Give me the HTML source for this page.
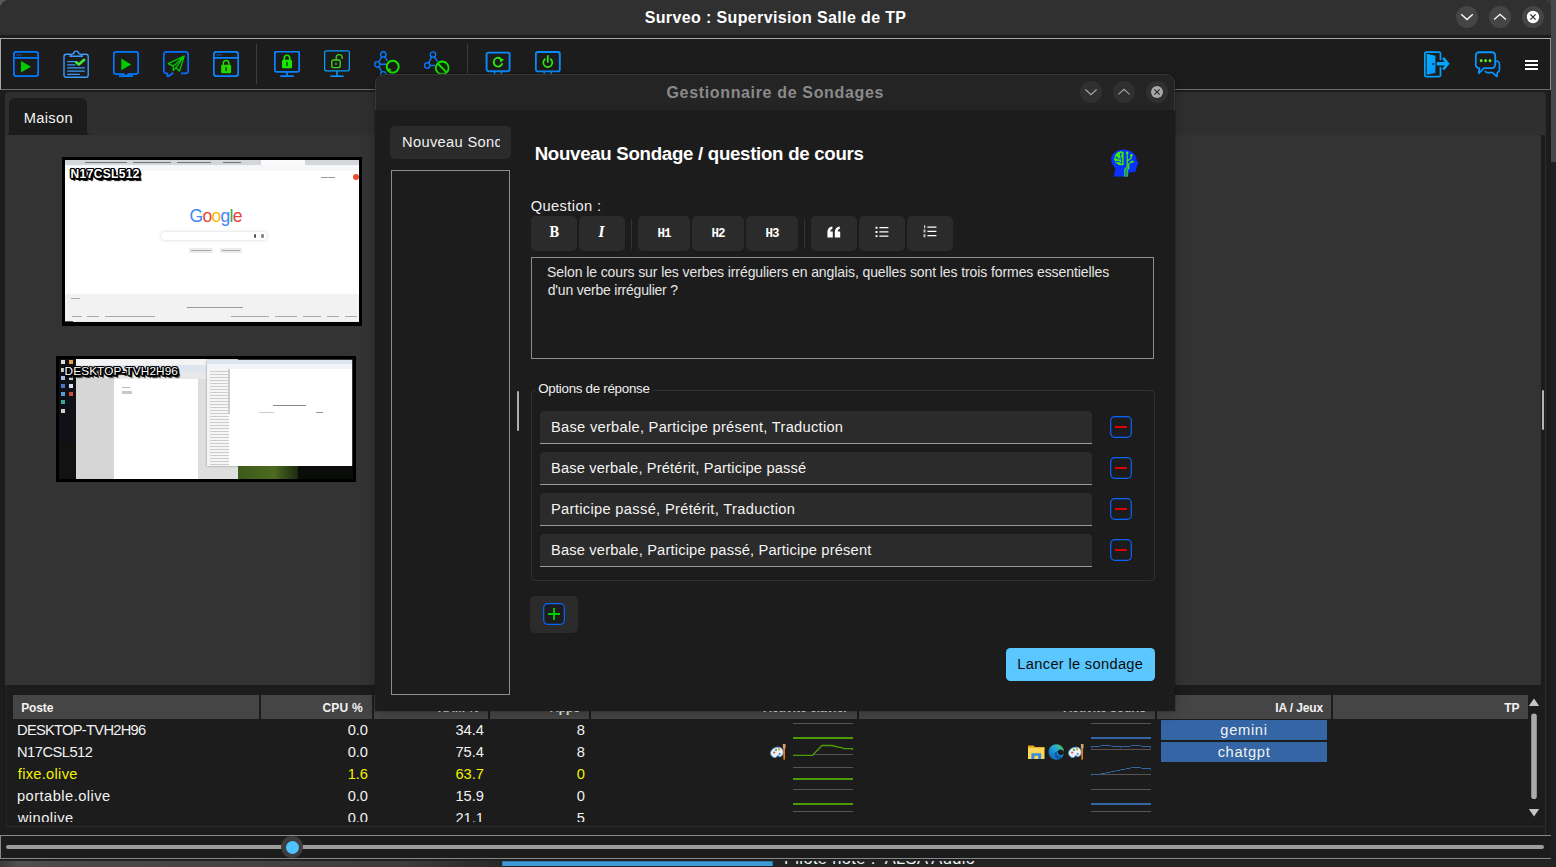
<!DOCTYPE html>
<html lang="fr"><head><meta charset="utf-8"><title>Surveo : Supervision Salle de TP</title>
<style>
*{box-sizing:border-box;margin:0;padding:0}
html,body{width:1556px;height:867px;overflow:hidden}
body{position:relative;background:#232323;font-family:"Liberation Sans",sans-serif;font-size:14.67px;color:#f0f0f0}
.abs{position:absolute}
.t{position:absolute;white-space:nowrap;line-height:1}
#win{position:absolute;left:0;top:0;width:1551px;height:860px;background:#1c1c1c;border-radius:9px 9px 0 0;overflow:hidden}
#titlebar{position:absolute;left:0;top:0;width:1551px;height:35px;background:#303030}
.wbtn{position:absolute;width:22px;height:22px;border-radius:11px;background:#454545}
#tbline{position:absolute;left:0;top:38px;width:1551px;height:1px;background:#a8a8a8}
#toolbar{position:absolute;left:0;top:39px;width:1551px;height:51px;background:#1c1c1c;border-left:1px solid #a8a8a8;border-right:1px solid #8a8a8a;border-bottom:1px solid #6c6c6c}
.ico{position:absolute;top:51px;width:26px;height:26px}
.lbl{color:#fff;text-shadow:-1px -1px 0 #000,1px -1px 0 #000,-1px 1px 0 #000,1px 1px 0 #000,0 -1.5px 0 #000,0 1.5px 0 #000,-1.5px 0 0 #000,1.5px 0 0 #000,2px 2px 0 #000,1px 2px 0 #000,2px 1px 0 #000,2.5px 2.5px 1px #000}
.hd{top:695px;height:24px;background:#454545}
.ht{top:701.5px;font-size:12px;font-weight:bold;color:#f2f2f2}
.r{text-align:right}
.c{font-size:14.67px;color:#f2f2f2}
.y{color:#f2f200}
#dlg{position:absolute;left:375px;top:74px;width:800px;height:637px;background:#1c1c1c;border-radius:9px 9px 0 0;overflow:hidden;box-shadow:0 0 0 1px rgba(0,0,0,.12),0 2px 14px rgba(0,0,0,.22)}
.dbtn{position:absolute;width:22px;height:22px;border-radius:11px;background:#303030}
.eb{position:absolute;top:142px;height:35px;background:#2b2b2b;border-radius:5px;text-align:center;color:#fff}
.m{font-family:"Liberation Mono","DejaVu Sans Mono",monospace;font-weight:bold;line-height:35px;display:inline-block}
.h{font-size:12.5px;letter-spacing:-1.1px;line-height:37px;transform:scaleY(1.06)}
.sf{font-family:"DejaVu Serif","Liberation Serif",serif;font-weight:bold;font-size:15px;line-height:33px;display:inline-block;transform:scaleX(.8)}
.q{font-size:14px;color:#e6e6e6}
.inp{position:absolute;left:165px;width:552px;height:33px;background:#2b2b2b;border-radius:4px 4px 0 0;border-bottom:1px solid #9a9a9a}
.o{left:176px;margin-top:.4px;font-size:14.67px;color:#f4f4f4}
.sep{position:absolute;top:44px;width:1px;height:40px;background:#3c3c3c}
</style></head><body>
<!-- background bits outside the main window -->
<div class="abs" style="left:1551px;top:0;width:5px;height:162px;background:#474747"></div><div class="abs" style="left:1551px;top:162px;width:5px;height:705px;background:#1f1f1f"></div>
<div class="abs" style="left:0;top:860px;width:1556px;height:7px;background:#212325"></div><div class="abs" style="left:0;top:860.5px;width:502px;height:6.5px;background:linear-gradient(90deg,#3c3c3c,#505050 4%,#4a4a4a 10%,#454545 40%,#3c3c3c 80%,#2c2c2c 95%,#262626)"></div><div class="abs" style="left:502px;top:861px;width:271px;height:5px;background:#3d9ad6;border:1px solid #2a78b0;border-bottom:none"></div><div class="abs" style="left:780px;top:860.5px;width:220px;height:6.5px;overflow:hidden"><div class="t" id="pil" style="left:4px;top:-10.3px;font-size:16.5px;color:#f0f0f0;letter-spacing:.35px">Pilote hôte :&nbsp; ALSA Audio</div></div>
<div class="abs" style="left:0;top:0;width:12px;height:12px;background:#5a5a5a"></div>
<div class="abs" style="left:1539px;top:0;width:12px;height:12px;background:#3a3a3a"></div>

<div id="win">
 <div id="titlebar"></div>
 <div class="t" id="title" style="left:644.64px;top:10px;font-weight:bold;font-size:16px;color:#fff;letter-spacing:0.373px">Surveo : Supervision Salle de TP</div>
 <div class="wbtn" style="left:1456px;top:6px"><svg width="22" height="22" viewBox="0 0 22 22"><path d="M5.2 8.3 L11 13.6 L16.8 8.3" fill="none" stroke="#fff" stroke-width="1.3"/></svg></div>
 <div class="wbtn" style="left:1489px;top:6px"><svg width="22" height="22" viewBox="0 0 22 22"><path d="M5.2 13.6 L11 8.3 L16.8 13.6" fill="none" stroke="#fff" stroke-width="1.3"/></svg></div>
 <div class="wbtn" style="left:1522px;top:6px"><svg width="22" height="22" viewBox="0 0 22 22"><circle cx="11" cy="11" r="6.2" fill="#fff"/><path d="M8.4 8.4 L13.6 13.6 M13.6 8.4 L8.4 13.6" fill="none" stroke="#303030" stroke-width="1.3"/></svg></div>
 <div id="tbline"></div>
 <div id="toolbar"></div>
 <!--ICONS-->
 <svg class="ico" style="left:13px" viewBox="0 0 26 26"><rect x=".8" y=".8" width="24.4" height="24.4" rx="2.6" fill="none" stroke="#0078ff" stroke-width="1.8"/><path d="M.8 6.8H25.2" stroke="#0078ff" stroke-width="1.8"/><path d="M3.6 3.9h1M5.6 3.9h1M7.6 3.9h1" stroke="#0078ff" stroke-width="1.2"/><path d="M8 10 L8 21.6 L18 15.7Z" fill="#00cc00"/></svg>
 <svg class="ico" style="left:63px;top:50px;height:28px" viewBox="0 0 26 28"><path d="M8 4.3H3.2a2.2 2.2 0 0 0-2.2 2.2V25a2.2 2.2 0 0 0 2.2 2.2H23a2.2 2.2 0 0 0 2.2-2.2V6.500000000000001a2.2 2.2 0 0 0-2.2-2.2H18.3" fill="none" stroke="#3b9bff" stroke-width="1.4"/><path d="M7.2 6.3c0-2 2-2.2 3.4-2.6c.2-1.6 1.1-2.600000000000001 2.6-2.6s2.4 1 2.6 2.6c1.4.4 3.4.6 3.4 2.6z" fill="none" stroke="#3b9bff" stroke-width="1.4"/><path d="M4.2 11.600000000000001H13M4.2 14.8H12.5M4.2 17.9H21.8M4.2 21.2H21.8M4.2 24.4H16.8" stroke="#3b9bff" stroke-width="1.2"/><path d="M13.300000000000001 12.3L15.8 14.4L21.2 9.8" fill="none" stroke="#3fe83f" stroke-width="2.6" stroke-linecap="round" stroke-linejoin="round"/></svg>
 <svg class="ico" style="left:113px" viewBox="0 0 26 26"><path d="M10.600000000000001 23.1H3.1a2.3 2.3 0 0 1-2.3-2.3V3.1A2.3 2.3 0 0 1 3.1.8H22.900000000000002a2.3 2.3 0 0 1 2.3 2.3V20.8a2.3 2.3 0 0 1-2.3 2.3H15.4L14.3 24.6H11.700000000000001Z" fill="none" stroke="#0078ff" stroke-width="1.8"/><path d="M6 25.2H20" stroke="#0078ff" stroke-width="1.7"/><path d="M8.3 7.6L8.3 19.2L18.2 13.4Z" fill="#00cc00"/></svg>
 <svg class="ico" style="left:163px" viewBox="0 0 26 26"><path d="M10.3 21.8L4.6 26L4.2 22.400000000000002H3.4A2.6 2.6 0 0 1 .8 19.8V3.4A2.6 2.6 0 0 1 3.4.8H22.6a2.6 2.6 0 0 1 2.6 2.6V19.8a2.6 2.6 0 0 1-2.6 2.6H18" fill="none" stroke="#0a6cff" stroke-width="1.8" stroke-linejoin="round"/><path d="M21.2 5L5.2 12.600000000000001L10.4 15.4L10.200000000000001 19.6L12.8 16.8L16.6 20.2ZM21.2 5L10.4 15.4M21.2 5L12.8 16.8" fill="#0a3d0a" fill-opacity=".5" stroke="#00d000" stroke-width="1.2" stroke-linejoin="round"/></svg>
 <svg class="ico" style="left:213px" viewBox="0 0 26 26"><rect x=".8" y=".8" width="24.4" height="24.4" rx="2.6" fill="none" stroke="#0a84ff" stroke-width="1.8"/><path d="M.8 6.8H25.2" stroke="#0a84ff" stroke-width="1.8"/><path d="M3.6 3.9h1M5.6 3.9h1M7.6 3.9h1" stroke="#0a84ff" stroke-width="1.2"/><path d="M10.3 14V12.4a2.8 2.8 0 0 1 5.6 0V14" fill="none" stroke="#22d600" stroke-width="1.5"/><rect x="8.1" y="13.7" width="10" height="8.6" rx="1.2" fill="#22d600"/><path d="M13.100000000000001 16.6V19.5" stroke="#143d0a" stroke-width="1.4" stroke-linecap="round"/></svg>
 <div class="sep" style="left:256px"></div>
 <svg class="ico" style="left:274px" viewBox="0 0 26 26"><rect x=".8" y=".5" width="24.4" height="20.4" rx="1.8" fill="none" stroke="#0a84ff" stroke-width="1.8"/><path d="M13 21V25M6.2 25.2H19.8" stroke="#0a84ff" stroke-width="1.7"/><path d="M10.3 9.5V7a2.7 2.7 0 0 1 5.4 0V9.5" fill="none" stroke="#19e600" stroke-width="1.6"/><rect x="8" y="8.8" width="10" height="8.4" rx="1.2" fill="#19e600"/><path d="M13 11.5V14.5" stroke="#143d0a" stroke-width="1.4" stroke-linecap="round"/></svg>
 <svg class="ico" style="left:324px;top:50px;height:28px" viewBox="0 0 26 28"><rect x=".6" y=".9" width="24.8" height="20" rx="1.8" fill="none" stroke="#0a9bff" stroke-width="1.3"/><path d="M13 21V26M6.4 26.2H19.6" stroke="#0a9bff" stroke-width="1.5"/><rect x="7.8" y="10" width="8.4" height="7.6" rx="1.8" fill="none" stroke="#3fd41a" stroke-width="1.4"/><path d="M12.2 10V7.6a3 3 0 0 1 6 0V9" fill="none" stroke="#3fd41a" stroke-width="1.3"/><path d="M12 12.7V15" stroke="#3fd41a" stroke-width="1.3"/></svg>
 <svg class="ico" style="left:374px" viewBox="0 0 26 26"><g fill="none" stroke="#0a7bff" stroke-width="1.4"><circle cx="9.3" cy="3.4" r="2.7"/><circle cx="3.4" cy="13.3" r="2.7"/><circle cx="9.3" cy="23.3" r="2.7"/><path d="M7.9 5.7L4.8 11M10.700000000000001 5.7L13.4 9.9M6.1 13.3H12M4.8 15.600000000000001L7.9 21"/></g><circle cx="18.7" cy="15.7" r="6" fill="#1c1c1c" stroke="#19e600" stroke-width="2"/><path d="M13.8 17.2L17.6 18.200000000000003L15 21Z" fill="#19e600"/></svg>
 <svg class="ico" style="left:424px" viewBox="0 0 26 26"><g fill="none" stroke="#0a7bff" stroke-width="1.4"><circle cx="9" cy="3.6" r="2.7"/><circle cx="3.2" cy="14.5" r="2.7"/><path d="M7.6 5.9L4.6 12.200000000000001M10.4 5.9L13.5 10.5M5.9 14.5H11"/></g><circle cx="18.2" cy="16.9" r="6.400000000000001" fill="#0d2a0d" stroke="#19e600" stroke-width="1.8"/><path d="M13.8 12.5L22.6 21.3" stroke="#19e600" stroke-width="1.8"/></svg>
 <div class="sep" style="left:467px"></div>
 <svg class="ico" style="left:485px" viewBox="0 0 26 26"><rect x="1.6" y="1.6" width="23" height="18.6" rx="2" fill="none" stroke="#0a8cff" stroke-width="1.9"/><path d="M9.6 20.2V25M16.400000000000002 20.2V25" stroke="#0a8cff" stroke-width="1.5"/><path d="M17.3 12.3A4.4 4.4 0 1 1 15.6 7.6" fill="none" stroke="#2bea12" stroke-width="1.8"/><path d="M14.2 6.7L19 8.6L15.6 11.600000000000001Z" fill="#2bea12"/></svg>
 <svg class="ico" style="left:535px" viewBox="0 0 26 26"><rect x=".8" y="1" width="24" height="19.4" rx="2" fill="none" stroke="#0a8cff" stroke-width="1.9"/><path d="M9.2 20.4V25M16.2 20.4V25" stroke="#0a8cff" stroke-width="1.5"/><path d="M9.9 8.200000000000001A4.5 4.5 0 1 0 15.700000000000001 8.200000000000001" fill="none" stroke="#2bea12" stroke-width="1.7" stroke-linecap="round"/><path d="M12.8 4.800000000000001V11" stroke="#2bea12" stroke-width="1.7" stroke-linecap="round"/></svg>
 <svg class="ico" style="left:1424px;height:27px" viewBox="0 0 27 27"><defs><linearGradient id="gd" x1="0" y1="0" x2="1" y2="1"><stop offset="0" stop-color="#00b4ff"/><stop offset="1" stop-color="#0a90ff"/></linearGradient></defs><path d="M17.1 9V2.2a1.500000000000000 1.5 0 0 0-1.5-1.5H2.3A1.5 1.5 0 0 0 .8 2.2V24.6a1.5 1.5 0 0 0 1.5 1.5H15.6a1.5 1.5 0 0 0 1.5-1.5V16.2" fill="none" stroke="#00a2ff" stroke-width="1.8"/><path d="M2.8 2.400000000000000L11.9 4.4V22.3L2.8 24.2Z" fill="url(#gd)"/><circle cx="9.5" cy="12.9" r="1" fill="#0b2038"/><path d="M13.2 10.9H21.6L18.9 7.6L20.9 5.8L26.6 12.7L20.9 19.6L18.9 17.8L21.6 14.5H13.2Z" fill="#00a8ff"/></svg>
 <svg class="ico" style="left:1475px;height:28px" viewBox="0 0 27 28"><path d="M4.4 17.2H4.2A3.4 3.4 0 0 1 .8 13.8V4.2A3.4 3.4 0 0 1 4.2.8H17.6A3.4 3.4 0 0 1 21 4.2V13.8A3.4 3.4 0 0 1 17.6 17.2H9.4L4 22.400000000000002Z" fill="none" stroke="#0a96ff" stroke-width="1.9" stroke-linejoin="round"/><path d="M22 10H22.400000000000002A3 3 0 0 1 25.400000000000002 13V19A3 3 0 0 1 23.200000000000003 21.8L22.8 26L18.200000000000003 21.900000000000002H13A3 3 0 0 1 10.3 20.2" fill="none" stroke="#0a96ff" stroke-width="1.7" stroke-linejoin="round"/><circle cx="6.4" cy="9.6" r="1.5" fill="#5cf02a"/><circle cx="11" cy="9.6" r="1.5" fill="#5cf02a"/><circle cx="15.6" cy="9.6" r="1.5" fill="#5cf02a"/></svg>
 <div class="abs" style="left:1525px;top:60px;width:13px;height:2px;background:#fff"></div>
 <div class="abs" style="left:1525px;top:64px;width:13px;height:2px;background:#fff"></div>
 <div class="abs" style="left:1525px;top:68px;width:13px;height:2px;background:#fff"></div>
 <!--/ICONS-->
 <!--MAIN-->
 <div class="abs" style="left:5px;top:92px;width:1540px;height:43px;background:#2f2f2f;border-radius:4px 4px 0 0"></div>
 <div class="abs" style="left:5px;top:135px;width:1536px;height:550px;background:#333333"></div>
 <div class="abs" style="left:9px;top:98px;width:78px;height:37px;background:#1c1c1c;border-radius:6px 6px 0 0"></div>
 <div class="abs" style="left:7px;top:133px;width:82px;height:2px;background:#1c1c1c;border-radius:2px 2px 0 0"></div>
 <div class="t" id="tab" style="left:23.66px;top:110.7px;font-size:14.67px;color:#f2f2f2;letter-spacing:0.36px">Maison</div>
 <div class="abs" style="left:1542px;top:390px;width:2px;height:40px;background:#b4b4b4;border-radius:1px"></div>
 <div class="abs" style="left:1545px;top:92px;width:1px;height:743px;background:#2b2b2b"></div>
 <!-- thumbnail 1 -->
 <div class="abs" style="left:62px;top:157px;width:300px;height:169px;background:#000"></div>
 <div class="abs" style="left:65px;top:160px;width:294px;height:162px;background:#fff;overflow:hidden">
  <div class="abs" style="left:0;top:0;width:294px;height:5.5px;background:#d3d6db"></div>
  <div class="abs" style="left:196px;top:0;width:44px;height:5px;background:#fafafa"></div>
  <div class="abs" style="left:0;top:5px;width:294px;height:6px;background:#f6f7f8"></div>
  <div class="abs" style="left:20px;top:2px;width:42px;height:1px;background:#707378"></div>
  <div class="abs" style="left:68px;top:2px;width:38px;height:1px;background:#707378"></div>
  <div class="abs" style="left:112px;top:2px;width:34px;height:1px;background:#707378"></div>
  <div class="abs" style="left:158px;top:2px;width:18px;height:1px;background:#707378"></div>
  <div class="abs" style="left:256px;top:17px;width:14px;height:1px;background:#999"></div>
  <div class="abs" style="left:288px;top:14px;width:6px;height:6px;border-radius:3px;background:#e8502a"></div>
  <div class="t" style="left:124.5px;top:48px;font-size:17.5px;letter-spacing:-.7px"><span style="color:#4285f4">G</span><span style="color:#ea4335">o</span><span style="color:#fbbc05">o</span><span style="color:#4285f4">g</span><span style="color:#34a853">l</span><span style="color:#ea4335">e</span></div>
  <div class="abs" style="left:95px;top:71px;width:108px;height:10px;border-radius:5px;border:1px solid #eee;box-shadow:0 0 2px #ddd"></div>
  <div class="abs" style="left:189px;top:74px;width:2px;height:4px;background:#555;border-radius:1px"></div>
  <div class="abs" style="left:196px;top:74px;width:3px;height:4px;background:#888;border-radius:1px"></div>
  <div class="abs" style="left:124px;top:88px;width:24px;height:5px;background:#ececec"></div>
  <div class="abs" style="left:155px;top:88px;width:22px;height:5px;background:#ececec"></div>
  <div class="abs" style="left:126px;top:90px;width:20px;height:1px;background:#aaa"></div>
  <div class="abs" style="left:157px;top:90px;width:18px;height:1px;background:#aaa"></div>
  <div class="abs" style="left:0;top:134px;width:294px;height:28px;background:#f2f2f2"></div>
  <div class="abs" style="left:6px;top:138px;width:9px;height:1px;background:#aaa"></div>
  <div class="abs" style="left:122px;top:147px;width:56px;height:1px;background:#9a9a9a"></div>
  <div class="abs" style="left:7px;top:156px;width:10px;height:1px;background:#aaa"></div>
  <div class="abs" style="left:22px;top:156px;width:12px;height:1px;background:#aaa"></div>
  <div class="abs" style="left:40px;top:156px;width:50px;height:1px;background:#aaa"></div>
  <div class="abs" style="left:166px;top:156px;width:38px;height:1px;background:#aaa"></div>
  <div class="abs" style="left:210px;top:156px;width:22px;height:1px;background:#aaa"></div>
  <div class="abs" style="left:238px;top:156px;width:18px;height:1px;background:#aaa"></div>
  <div class="abs" style="left:262px;top:156px;width:12px;height:1px;background:#aaa"></div>
  <div class="abs" style="left:280px;top:156px;width:12px;height:1px;background:#aaa"></div>
  <div class="abs" style="left:0;top:161px;width:294px;height:1px;background:#e8eaec"></div>
  <div class="abs" style="left:0;top:161px;width:8px;height:1px;background:#555"></div>
 </div>
 <div class="t lbl" id="lb1" style="left:70.6px;top:167.8px;font-size:12px;font-weight:bold;letter-spacing:.35px">N17CSL512</div>
 <!-- thumbnail 2 -->
 <div class="abs" style="left:56px;top:356px;width:300px;height:126px;background:#000"></div>
 <div class="abs" style="left:59px;top:359px;width:294px;height:120px;background:#10130f;overflow:hidden">
  <div class="abs" style="left:0;top:0;width:17px;height:85px;background:#101116"></div>
  <div class="abs" style="left:2px;top:1px;width:4px;height:4px;background:#ddd"></div><div class="abs" style="left:10px;top:1px;width:4px;height:4px;background:#e9a03a"></div>
  <div class="abs" style="left:2px;top:9px;width:4px;height:4px;background:#c9ccd5"></div><div class="abs" style="left:10px;top:9px;width:4px;height:4px;background:#8aa0c8"></div>
  <div class="abs" style="left:2px;top:17px;width:4px;height:4px;background:#a8b8d8"></div><div class="abs" style="left:10px;top:17px;width:4px;height:4px;background:#d8d8d8"></div>
  <div class="abs" style="left:2px;top:25px;width:4px;height:4px;background:#4a78d0"></div><div class="abs" style="left:10px;top:25px;width:4px;height:4px;background:#d8e0f0"></div>
  <div class="abs" style="left:2px;top:33px;width:4px;height:4px;background:#5a9ad8"></div><div class="abs" style="left:10px;top:33px;width:4px;height:4px;background:#d04a3a"></div>
  <div class="abs" style="left:2px;top:41px;width:4px;height:4px;background:#3aa898"></div>
  <div class="abs" style="left:2px;top:50px;width:4px;height:4px;background:#cfcfcf"></div>
  <div class="abs" style="left:17px;top:0;width:162px;height:120px;background:#dedede"></div>
  <div class="abs" style="left:17px;top:0;width:162px;height:6px;background:#f3f3f4"></div>
  <div class="abs" style="left:17px;top:6px;width:162px;height:7px;background:#dde5ee"></div>
  <div class="abs" style="left:17px;top:13px;width:162px;height:7px;background:#e8e8e8"></div>
  <div class="abs" style="left:17px;top:19px;width:38px;height:101px;background:#d6d6d6"></div>
  <div class="abs" style="left:55px;top:20px;width:84px;height:100px;background:#fff"></div>
  <div class="abs" style="left:63px;top:28px;width:8px;height:1px;background:#bbb"></div>
  <div class="abs" style="left:63px;top:32px;width:10px;height:3px;background:#c8c8c8"></div>
  <div class="abs" style="left:148px;top:1px;width:145px;height:106px;background:#fff;box-shadow:0 0 2px #888"></div>
  <div class="abs" style="left:148px;top:1px;width:145px;height:4px;background:#dfe6f2"></div>
  <div class="abs" style="left:148px;top:5px;width:145px;height:5px;background:#f1f3f6"></div>
  <div class="abs" style="left:148px;top:10px;width:22px;height:97px;background:repeating-linear-gradient(180deg,#f4f4f4 0,#f4f4f4 2px,#c4c4c4 2px,#c4c4c4 3px);opacity:.85"></div>
  <div class="abs" style="left:148px;top:10px;width:3px;height:97px;background:#f4f4f4"></div>
  <div class="abs" style="left:169px;top:10px;width:2px;height:45px;background:#ccc"></div>
  <div class="abs" style="left:214px;top:46px;width:33px;height:1px;background:#888"></div>
  <div class="abs" style="left:200px;top:53px;width:15px;height:1px;background:#ccc"></div>
  <div class="abs" style="left:257px;top:53px;width:7px;height:1px;background:#999"></div>
  <div class="abs" style="left:179px;top:107px;width:60px;height:13px;background:linear-gradient(90deg,#3d5a1a,#4c6b20 60%,#1c2a10)"></div>
  <div class="abs" style="left:239px;top:107px;width:55px;height:13px;background:#0a0c0a"></div>
 </div>
 <div class="t lbl" id="lb2" style="left:64.6px;top:366.2px;font-size:11.8px;letter-spacing:.1px">DESKTOP-TVH2H96</div>
 <!--/MAIN-->
 <!--TABLE-->
 <div class="abs" style="left:6px;top:685px;width:1540px;height:142px;border-left:1px solid #262626;border-bottom:1px solid #2a2a2a"></div>
 <div class="abs hd" style="left:13px;width:246px"></div>
 <div class="abs hd" style="left:261px;width:111px"></div>
 <div class="abs hd" style="left:374px;width:114px"></div>
 <div class="abs hd" style="left:490px;width:99px"></div>
 <div class="abs hd" style="left:591px;width:266px"></div>
 <div class="abs hd" style="left:859px;width:296px"></div>
 <div class="abs hd" style="left:1157px;width:174px"></div>
 <div class="abs hd" style="left:1333px;width:195px"></div>
 <div class="t ht" id="h1" style="left:21.16px;letter-spacing:-0.1px">Poste</div>
 <div class="t ht r" id="h2" style="right:1188px;letter-spacing:0.25px">CPU %</div>
 <div class="t ht r" id="h3" style="right:1072px">RAM %</div>
 <div class="t ht r" id="h4" style="right:971px">Apps</div>
 <div class="t ht r" id="h5" style="right:703px">Activité clavier</div>
 <div class="t ht r" id="h6" style="right:405px">Activité souris</div>
 <div class="t ht r" id="h7" style="right:228px;letter-spacing:-0.125px">IA / Jeux</div>
 <div class="t ht r" id="h8" style="right:31.5px">TP</div>
 <div class="abs" id="rows" style="left:13px;top:719px;width:1515px;height:103px;overflow:hidden">
  <div class="t c" id="r1" style="left:4.0px;top:4px;letter-spacing:-0.7px">DESKTOP-TVH2H96</div>
  <div class="t c" id="r2" style="left:4.0px;top:26px;letter-spacing:-0.5px">N17CSL512</div>
  <div class="t c y" id="r3" style="left:4.8px;top:48px;letter-spacing:0.288px">fixe.olive</div>
  <div class="t c" id="r4" style="left:4.0px;top:70px;letter-spacing:0.462px">portable.olive</div>
  <div class="t c" id="r5" style="left:4.8px;top:92px;letter-spacing:0.457px">winolive</div>
  <div class="t c r" style="right:1160px;top:4px">0.0</div>
  <div class="t c r" style="right:1160px;top:26px">0.0</div>
  <div class="t c r y" style="right:1160px;top:48px">1.6</div>
  <div class="t c r" style="right:1160px;top:70px">0.0</div>
  <div class="t c r" style="right:1160px;top:92px">0.0</div>
  <div class="t c r" style="right:1044px;top:4px">34.4</div>
  <div class="t c r" style="right:1044px;top:26px">75.4</div>
  <div class="t c r y" style="right:1044px;top:48px">63.7</div>
  <div class="t c r" style="right:1044px;top:70px">15.9</div>
  <div class="t c r" style="right:1044px;top:92px">21.1</div>
  <div class="t c r" style="right:943px;top:4px">8</div>
  <div class="t c r" style="right:943px;top:26px">8</div>
  <div class="t c r y" style="right:943px;top:48px">0</div>
  <div class="t c r" style="right:943px;top:70px">0</div>
  <div class="t c r" style="right:943px;top:92px">5</div>
 </div>
 <!-- sparklines -->
 <svg class="abs" style="left:793px;top:719px" width="60" height="100" viewBox="0 0 60 100"><g stroke="#555" stroke-width="1" fill="none"><path d="M0 4.5H60M20 35.5H60M0 48.5H60M0 70.5H60M0 92.5H60"/></g><g stroke="#4e9a06" fill="none"><path d="M0 19H60M0 60H60M0 85H60" stroke-width="2"/><path d="M0 36.3H19.5L29 26.5H39L45 28L49.5 28.8L50.5 29.6H59.5V31" stroke-width="1.3"/></g></svg>
 <svg class="abs" style="left:1091px;top:719px" width="60" height="100" viewBox="0 0 60 100"><g stroke="#555" stroke-width="1" fill="none"><path d="M0 4.5H60M0 30.5H60M0 55.5H60M0 70.5H60M0 92.5H60"/></g><g stroke="#3465a4" fill="none"><path d="M0 19H60M0 85H60" stroke-width="2"/><path d="M.5 29V27.5H9L10 26.5H19.5L20.500000000000004 27.5H29.5V28.5V27.5H39L40 26.5H49.5L50.5 27.5H59.5V29" stroke-width="1"/><path d="M.5 56.5V55.5H9L10 54.5H14L15 53.5H19L20 52.5H24L25 51.5H29L30 50.5H34L35 49.5H39L40 48.5H49.5L50.5 49.5H59.5V51" stroke-width="1"/></g></svg>
 <!-- app icons -->
 <svg class="abs" style="left:770px;top:744px" width="17" height="16" viewBox="0 0 17 16"><path d="M8 3.2C4 3.2.6 5.8.6 9.2c0 2.4 2 4.400000000000001 4.6 4.400000000000001c1.6 0 1.3-1.700000000000000 2.500000000000000-1.900000000000000c1.2-.2 1.300000000000000 1.400000000000000 2.8.9c1.7-.6 2.8-2.4 2.8-4.400000000000001C13.3 5 11.200000000000001 3.2 8 3.2Z" fill="#e8f1f8" stroke="#5c9ed0" stroke-width="1"/><circle cx="4.2" cy="8.5" r="1.100000000000000" fill="#e04a3a"/><circle cx="6" cy="5.9" r="1.100000000000000" fill="#46b04a"/><circle cx="9" cy="5.4" r="1.100000000000000" fill="#f0a020"/><circle cx="9.6" cy="10" r="1" fill="#3a7ad0"/><path d="M14.2 1.200000000000000V15" stroke="#e87d1a" stroke-width="1.700000000000000" stroke-linecap="round"/><path d="M14.2.6V3.6" stroke="#d8a070" stroke-width="2.6" stroke-linecap="round"/></svg>
 <svg class="abs" style="left:1028px;top:744px" width="17" height="16" viewBox="0 0 17 16"><path d="M0 1.6h5.6l1.400000000000000 1.400000000000000H16.5V5H0Z" fill="#e8a818"/><rect x="0" y="3.8" width="16.5" height="11.200000000000001" fill="#fbd75a"/><path d="M3.4 15V9.2h9.8V15h-3V11.8H6.4V15Z" fill="#3a8ee0"/></svg>
 <svg class="abs" style="left:1048px;top:744px" width="17" height="16" viewBox="0 0 17 16"><defs><linearGradient id="eg" x1="0" y1="1" x2="1" y2="0"><stop offset="0" stop-color="#0c59a4"/><stop offset=".5" stop-color="#1b9de2"/><stop offset="1" stop-color="#5fd35a"/></linearGradient></defs><circle cx="8.3" cy="8" r="7.8" fill="url(#eg)"/><path d="M16 8.4c0 2-1.600000000000000 3.4-3.6 3.4c-2.4 0-3.600000000000000-1.400000000000000-3.600000000000000-2.800000000000000c0-.8.4-1.400000000000000.8-1.800000000000000c-1.800000000000000.2-3.200000000000000 1.600000000000000-3.200000000000000 3.600000000000000c0 2.600000000000000 2.400000000000000 4.600000000000001 5.200000000000001 4.600000000000001" fill="#0a4a9a" fill-opacity=".75"/><path d="M10.200000000000001 9.600000000000000c-.4-.4-.6-1-.6-1.500000000000000c0-1.400000000000000 1.200000000000000-2.600000000000000 3-2.600000000000000c1.400000000000000 0 3.400000000000000.8 3.400000000000000 3c0 1.600000000000000-1.400000000000000 2.800000000000000-3 2.800000000000000c-1.200000000000000 0-2.200000000000000-.6-2.800000000000000-1.700000000000000Z" fill="#1c1c1c"/></svg>
 <svg class="abs" style="left:1068px;top:744px" width="17" height="16" viewBox="0 0 17 16"><path d="M8 3.2C4 3.2.6 5.8.6 9.2c0 2.4 2 4.400000000000001 4.6 4.400000000000001c1.6 0 1.3-1.700000000000000 2.500000000000000-1.900000000000000c1.2-.2 1.300000000000000 1.400000000000000 2.8.9c1.7-.6 2.8-2.4 2.8-4.400000000000001C13.3 5 11.200000000000001 3.2 8 3.2Z" fill="#e8f1f8" stroke="#5c9ed0" stroke-width="1"/><circle cx="4.2" cy="8.5" r="1.100000000000000" fill="#e04a3a"/><circle cx="6" cy="5.9" r="1.100000000000000" fill="#46b04a"/><circle cx="9" cy="5.4" r="1.100000000000000" fill="#f0a020"/><circle cx="9.6" cy="10" r="1" fill="#3a7ad0"/><path d="M14.2 1.200000000000000V15" stroke="#e87d1a" stroke-width="1.700000000000000" stroke-linecap="round"/><path d="M14.2.6V3.6" stroke="#d8a070" stroke-width="2.6" stroke-linecap="round"/></svg>
 <!-- IA cells -->
 <div class="abs" style="left:1161px;top:720px;width:166px;height:20px;background:#3465a4"></div>
 <div class="abs" style="left:1161px;top:742px;width:166px;height:20px;background:#3465a4"></div>
 <div class="t c" id="g1" style="left:1161px;width:166px;text-align:center;top:722.5px;letter-spacing:0.68px">gemini</div>
 <div class="t c" id="g2" style="left:1161px;width:166px;text-align:center;top:744.5px;letter-spacing:0.666px">chatgpt</div>
 <!-- scrollbar -->
 <svg class="abs" style="left:1528px;top:695px" width="12" height="127" viewBox="0 0 12 127"><path d="M.8 11L6 3.600000000000000L11.2 11Z" fill="#c4c4c4"/><path d="M.8 114L6 121.4L11.2 114Z" fill="#c4c4c4"/><rect x="3.2" y="18.5" width="5.6" height="85.5" rx="2.8" fill="#aaa"/></svg>
 <!--/TABLE-->
 <!--SLIDER-->
 <div class="abs" style="left:0;top:835px;width:1551px;height:24px;border:1px solid #888;border-right:none;background:#1c1c1c"></div>
 <div class="abs" style="left:6px;top:845px;width:1538px;height:4px;border-radius:2px;background:#9c9c9c"></div>
 <div class="abs" style="left:281px;top:836px;width:22px;height:22px;border-radius:11px;background:#3e3e3e"></div>
 <div class="abs" style="left:285.5px;top:840.5px;width:13px;height:13px;border-radius:7px;background:#4fc3ff"></div>
 <!--/SLIDER-->
 <!--DIALOG-->
 <div id="dlg">
  <div class="abs" style="left:0;top:0;width:800px;height:36px;background:#242424;border:1px solid #383838;border-bottom:none;border-radius:9px 9px 0 0"></div>
  <div class="t" id="dtitle" style="left:291.52px;top:11px;font-size:16px;font-weight:bold;color:#8a8a8a;letter-spacing:0.652px">Gestionnaire de Sondages</div>
  <div class="dbtn" style="left:705px;top:7px"><svg width="22" height="22" viewBox="0 0 22 22"><path d="M5.4 8.5 L11 13.6 L16.6 8.5" fill="none" stroke="#a4a4a4" stroke-width="1.15"/></svg></div>
  <div class="dbtn" style="left:738px;top:7px"><svg width="22" height="22" viewBox="0 0 22 22"><path d="M5.4 13.4 L11 8.3 L16.6 13.4" fill="none" stroke="#a4a4a4" stroke-width="1.15"/></svg></div>
  <div class="dbtn" style="left:771px;top:7px"><svg width="22" height="22" viewBox="0 0 22 22"><circle cx="11" cy="11" r="6" fill="#a8a8a8"/><path d="M8.3 8.3 L13.7 13.7 M13.7 8.3 L8.3 13.7" fill="none" stroke="#262626" stroke-width="1.1"/></svg></div>
  <!-- left column -->
  <div class="abs" style="left:15px;top:52px;width:121px;height:33px;background:#2b2b2b;border-radius:5px;overflow:hidden"><div class="t" id="nb" style="left:12px;top:8.5px;width:97.5px;overflow:hidden;font-size:14.67px;letter-spacing:.33px">Nouveau Sondage</div></div>
  <div class="abs" style="left:16px;top:96px;width:119px;height:525px;border:1px solid #8c8c8c"></div>
  <div class="abs" style="left:142px;top:317px;width:2px;height:40px;background:#b0b0b0;border-radius:1px"></div>
  <!-- right column -->
  <div class="t" id="hd" style="left:159.7px;top:71.2px;font-size:18.67px;font-weight:bold;color:#fff;letter-spacing:-0.288px">Nouveau Sondage / question de cours</div>
  <svg class="abs" style="left:735.5px;top:75px" width="28" height="28" viewBox="0 0 28 28"><path d="M12.5.4C5.6.4.2 4.600000000000000.2 10.600000000000000c0 3.600000000000000 1.600000000000000 6.200000000000000 4 8.600000000000000c.2 2.800000000000000-.4 5.400000000000000-1.800000000000000 8.400000000000000H17.200000000000000c.2-1.600000000000000.2-3 .8-4.600000000000000c2 .2 4.400000000000000.4 6.400000000000000-.2c.8-.4.600000000000000-2.200000000000000.800000000000000-3.200000000000000c.2-.8.800000000000000-1.400000000000000.800000000000000-2.200000000000000c0-.6-.2-1-.2-1.400000000000000c.6-.2 1.800000000000000-.4 1.800000000000000-1.200000000000000c0-1-1.400000000000000-2.200000000000000-1.800000000000000-3.200000000000000C25.600000000000000 5.400000000000000 20.600000000000000.4 12.5.4Z" fill="#0a32ff"/><path d="M12.600000000000000 3.200000000000000c-1.200000000000000-1-2.800000000000000-1.200000000000000-4-.4c-1.600000000000000-.2-2.800000000000000.8-3.200000000000000 2.200000000000000c-1.400000000000000.6-2 2-1.600000000000000 3.200000000000000c-1 1-1 2.600000000000000 0 3.600000000000000c0 1.600000000000000 1.200000000000000 2.800000000000000 2.600000000000000 3c1 1.400000000000000 2.800000000000000 1.800000000000000 4.200000000000000 1.200000000000000c.8.4 1.600000000000000.2 2-.2Z" fill="#3cf000"/><path d="M9.800000000000000 5.200000000000000v3.200000000000000l.8.800000000000000v5.600000000000000M5.400000000000000 8.600000000000000l2.400000000000000 1.400000000000000h2.800000000000000M5.400000000000000 12.600000000000000h2.800000000000000l1.600000000000000 1.400000000000000" fill="none" stroke="#0a32ff" stroke-width="1"/><circle cx="9.800000000000000" cy="5" r="1" fill="#0a32ff"/><circle cx="5.400000000000000" cy="8.600000000000000" r="1" fill="#0a32ff"/><circle cx="5.400000000000000" cy="12.600000000000000" r=".9" fill="#0a32ff"/><path d="M16.2 3.8V18L13.9 20.6V27.8M21.4 12.8H20L17.7 15.2V19.2L16.1 21.2V27.8M20.4 6.2V8.8L16.2 12.2" fill="none" stroke="#3cf000" stroke-width="1.2"/><circle cx="16.200000000000000" cy="3.800000000000000" r="1.300000000000000" fill="#3cf000"/><circle cx="20.400000000000000" cy="6.200000000000000" r="1.300000000000000" fill="#3cf000"/><circle cx="21.400000000000000" cy="12.800000000000000" r="1.200000000000000" fill="#3cf000"/></svg>
  <div class="t" id="ql" style="left:155.66px;top:125px;font-size:14.67px;letter-spacing:0.399px">Question :</div>
  <div class="eb" style="left:156px;width:46px"><span class="sf">B</span></div>
  <div class="eb" style="left:204px;width:46px"><span class="sf" style="font-style:italic">I</span></div>
  <div class="abs" style="left:256px;top:145px;width:1px;height:30px;background:#333"></div>
  <div class="eb" style="left:263px;width:52px"><span class="m h">H1</span></div>
  <div class="eb" style="left:317px;width:52px"><span class="m h">H2</span></div>
  <div class="eb" style="left:371px;width:52px"><span class="m h">H3</span></div>
  <div class="abs" style="left:429px;top:145px;width:1px;height:30px;background:#333"></div>
  <div class="eb" style="left:436px;width:46px"><svg width="14" height="12" viewBox="0 0 14 12" style="margin-top:10px"><path d="M.4 11.400000000000000V6.2C.4 3 2.200000000000000 1 5.400000000000000.6V2.800000000000000C4.200000000000000 3.200000000000000 3.400000000000000 4 3.400000000000000 5.600000000000000H5.800000000000000V11.400000000000000ZM7.800000000000000 11.400000000000000V6.2C7.800000000000000 3 9.600000000000000 1 12.800000000000000.6V2.800000000000000C11.600000000000000 3.200000000000000 10.800000000000000 4 10.800000000000000 5.600000000000000H13.200000000000000V11.400000000000000Z" fill="#fff"/></svg></div>
  <div class="eb" style="left:484px;width:46px"><svg width="14" height="12" viewBox="0 0 14 12" style="margin-top:10px"><path d="M.5.8h2v1.900000000000000h-2zM.5 5h2v1.900000000000000h-2zM.5 9.200000000000000h2v1.900000000000000h-2z" fill="#fff"/><path d="M4.400000000000000 1.700000000000000H13.400000000000000M4.400000000000000 5.900000000000000H13.400000000000000M4.400000000000000 10.100000000000000H13.400000000000000" stroke="#fff" stroke-width="1.300000000000000"/></svg></div>
  <div class="eb" style="left:532px;width:46px"><svg width="14" height="13" viewBox="0 0 14 13" style="margin-top:9px"><path d="M1 .2h1.300000000000000v3h-1.300000000000000zM.6 4.600000000000000h1.800000000000000v2.800000000000000h-1.800000000000000zM.6 9.200000000000000h1.800000000000000v3h-1.800000000000000z" fill="#e8e8e8" fill-opacity=".85"/><path d="M4.400000000000000 2.200000000000000H13.400000000000000M4.400000000000000 6.400000000000000H13.400000000000000M4.400000000000000 10.600000000000000H13.400000000000000" stroke="#fff" stroke-width="1.300000000000000"/></svg></div>
  <div class="abs" style="left:156px;top:183px;width:623px;height:102px;border:1px solid #8c8c8c"></div>
  <div class="t q" id="q1" style="left:172.0px;top:191px;letter-spacing:-0.095px">Selon le cours sur les verbes irréguliers en anglais, quelles sont les trois formes essentielles</div>
  <div class="t q" id="q2" style="left:172.8px;top:209.3px;letter-spacing:-0.217px">d'un verbe irrégulier ?</div>
  <!-- options -->
  <div class="abs" style="left:155.500px;top:315.5px;width:624.5px;height:191px;border:1px solid #313131;border-radius:4px"></div>
  <div class="t" id="ol" style="left:160.2px;top:307.5px;font-size:13.33px;background:#1c1c1c;padding:0 3px;letter-spacing:-0.276px">Options de réponse</div>
  <div class="inp" style="top:337px"></div><div class="inp" style="top:378px"></div><div class="inp" style="top:419px"></div><div class="inp" style="top:460px"></div>
  <div class="t o" id="o1" style="top:346px;letter-spacing:0.28px">Base verbale, Participe présent, Traduction</div>
  <div class="t o" id="o2" style="top:387px;letter-spacing:0.154px">Base verbale, Prétérit, Participe passé</div>
  <div class="t o" id="o3" style="top:428px;letter-spacing:0.327px">Participe passé, Prétérit, Traduction</div>
  <div class="t o" id="o4" style="top:469px;letter-spacing:0.176px">Base verbale, Participe passé, Participe présent</div>
  <svg class="abs" style="left:735px;top:342px" width="22" height="22" viewBox="0 0 22 22"><rect x=".7" y=".7" width="20.6" height="20.6" rx="4" fill="none" stroke="#0a64ff" stroke-width="1.2"/><path d="M5 11H17" stroke="#f00000" stroke-width="1.8"/></svg>
  <svg class="abs" style="left:735px;top:383px" width="22" height="22" viewBox="0 0 22 22"><rect x=".7" y=".7" width="20.6" height="20.6" rx="4" fill="none" stroke="#0a64ff" stroke-width="1.2"/><path d="M5 11H17" stroke="#f00000" stroke-width="1.8"/></svg>
  <svg class="abs" style="left:735px;top:424px" width="22" height="22" viewBox="0 0 22 22"><rect x=".7" y=".7" width="20.6" height="20.6" rx="4" fill="none" stroke="#0a64ff" stroke-width="1.2"/><path d="M5 11H17" stroke="#f00000" stroke-width="1.8"/></svg>
  <svg class="abs" style="left:735px;top:465px" width="22" height="22" viewBox="0 0 22 22"><rect x=".7" y=".7" width="20.6" height="20.6" rx="4" fill="none" stroke="#0a64ff" stroke-width="1.2"/><path d="M5 11H17" stroke="#f00000" stroke-width="1.8"/></svg>
  <div class="abs" style="left:155px;top:522px;width:48px;height:37px;background:#2b2b2b;border-radius:5px"></div>
  <svg class="abs" style="left:168px;top:529px" width="22" height="22" viewBox="0 0 22 22"><rect x=".7" y=".7" width="20.6" height="20.6" rx="4" fill="#1c1c1c" stroke="#0a64ff" stroke-width="1.2"/><path d="M5 11H17M11 5V17" stroke="#00d000" stroke-width="1.8"/></svg>
  <div class="abs" style="left:631px;top:574px;width:149px;height:33px;background:#5ac8ff;border-radius:4.5px"></div>
  <div class="t" id="go" style="left:642.36px;top:583.2px;font-size:14.67px;color:#0c0c0c;letter-spacing:0.313px">Lancer le sondage</div>
 </div>
 <!--/DIALOG-->
</div>
</body></html>
